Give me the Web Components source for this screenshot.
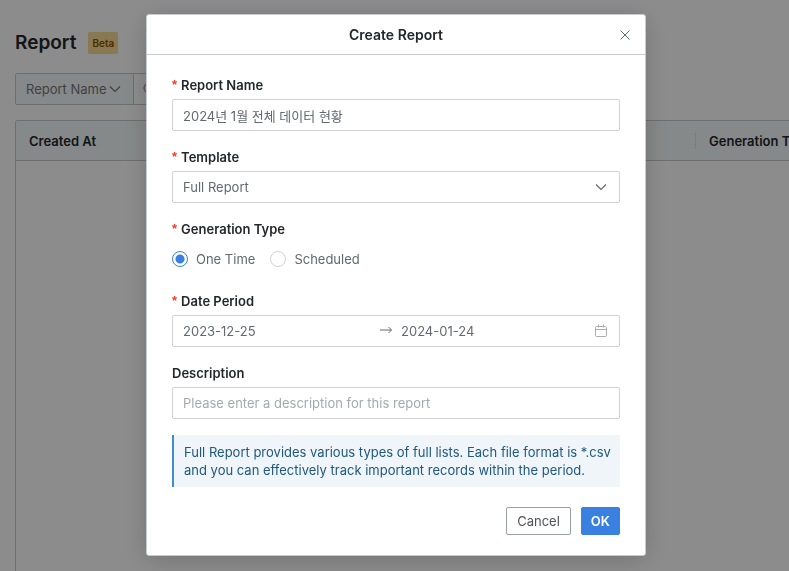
<!DOCTYPE html>
<html lang="en">
<head>
<meta charset="utf-8">
<title>Create Report</title>
<style>
    html, body {
        height: 100%;
        margin: 0;
    }
    body {
        overflow: hidden;
        background: #fff;
        color: #626971;
        font: 13px/18px Inter, "Noto Sans CJK KR", sans-serif;
    }
</style>
</head>
<body>
<report-page></report-page>
<modal-dialog heading="Create Report">
    <form-field label="Report Name" required>
        <text-input name="name" value="2024년 1월 전체 데이터 현황"></text-input>
    </form-field>
    <form-field label="Template" required>
        <select-box name="template" option="Full Report"></select-box>
    </form-field>
    <form-field label="Generation Type" required>
        <radio-group name="type" options="One Time,Scheduled"></radio-group>
    </form-field>
    <form-field label="Date Period" required>
        <date-range from="2023-12-25" to="2024-01-24"></date-range>
    </form-field>
    <form-field label="Description">
        <text-input name="description" placeholder="Please enter a description for this report"></text-input>
    </form-field>
    <info-note>Full Report provides various types of full lists. Each file format is *.csv and you can effectively track important records within the period.</info-note>
    <action-button slot="footer">Cancel</action-button>
    <action-button slot="footer" kind="primary">OK</action-button>
</modal-dialog>

<script>
const base = `
<style>
    * { box-sizing: border-box; }
    :host {
        display: block;
        box-sizing: border-box;
    }
    input, select, button {
        margin: 0;
        font: inherit;
        color: inherit;
    }
    svg {
        display: block;
        fill: none;
        stroke: currentColor;
    }
</style>
`;

const chevron = '<svg width="12" height="12" viewBox="0 0 12 12" stroke-width="1.2"><path d="M1 3.5 6 8.5 11 3.5"/></svg>';

class BaseElement extends HTMLElement {
    constructor() {
        super();
        this._sR = this.attachShadow({ mode: 'open' });
    }

    connectedCallback() {
        this._sR.innerHTML = base + this.render();
    }

    attr(name) {
        return this.getAttribute(name) || '';
    }
}

class ReportPage extends BaseElement {
    render() {
        return `
<style>
    :host {
        display: flex;
        flex-direction: column;
        height: 100%;
        padding: 28px 0 0 15px;
        overflow: hidden;
        color: #72777d;
    }
    .title {
        display: flex;
        align-items: center;
        gap: 12px;
        height: 30px;
    }
    h1 {
        margin: 0;
        font-size: 19px;
        line-height: 30px;
        font-weight: 600;
        color: #24272b;
    }
    .badge {
        padding: 2px 4px;
        border-radius: 2px;
        background: #f8dc96;
        color: #8c5000;
        font-size: 10px;
        font-weight: 600;
    }
    .toolbar {
        display: flex;
        width: 60%;
        height: 32px;
        margin: 15px 0;
        border: 1px solid #c5c8cc;
        border-radius: 2px;
    }
    .filter {
        position: relative;
        display: flex;
        align-items: center;
        border-right: 1px solid #c5c8cc;
        background: #f5f9f9;
    }
    .filter select {
        height: 100%;
        padding: 0 26px 0 10px;
        border: 0;
        appearance: none;
        background: none;
    }
    .filter svg {
        position: absolute;
        right: 12px;
        pointer-events: none;
    }
    .search {
        display: flex;
        align-items: center;
        flex: 1;
        padding-left: 9px;
    }
    .search input {
        flex: 1;
        border: 0;
        background: none;
    }
    .table {
        flex: 1;
        overflow: hidden;
        border: 1px solid #c5c8cc;
        border-width: 1px 0 0 1px;
        border-radius: 3px 0 0 0;
    }
    table {
        width: 900px;
        table-layout: fixed;
        border-collapse: separate;
        border-spacing: 0;
    }
    th {
        height: 40px;
        padding: 0 13px;
        border-bottom: 1px solid #c5c8cc;
        background: #f5f9f9;
        color: #24272b;
        font-weight: 600;
        text-align: left;
        white-space: nowrap;
    }
    th:first-child {
        width: 680px;
        background: linear-gradient(#e0e3e4, #e0e3e4) right center / 1px 16px no-repeat #f5f9f9;
    }
</style>
<div class="title"><h1>Report</h1><span class="badge">Beta</span></div>
<div class="toolbar">
    <div class="filter">
        <select aria-label="Search by"><option>Report Name</option></select>
        ${chevron}
    </div>
    <label class="search">
        <svg width="14" height="14" viewBox="0 0 14 14"><circle cx="6" cy="6" r="5"/><path d="m10 10 3 3"/></svg>
        <input type="text" aria-label="Search">
    </label>
</div>
<div class="table">
    <table><thead><tr><th>Created At</th><th>Generation Type</th></tr></thead></table>
</div>
`;
    }
}

class ModalDialog extends BaseElement {
    render() {
        return `
<style>
    :host {
        position: fixed;
        inset: 0;
        display: flex;
        justify-content: center;
        align-items: flex-start;
        padding: 14px 0 14px 3px;
        background: rgba(0, 0, 0, .45);
    }
    .dialog {
        width: 100%;
        max-width: 500px;
        border: 1px solid #c8cbd0;
        border-radius: 3px;
        background: #fff;
        box-shadow: 0 4px 24px rgba(0, 0, 0, .18);
    }
    header {
        display: grid;
        grid-template-columns: 40px 1fr 40px;
        align-items: center;
        height: 40px;
        border-bottom: 1px solid #c8cbd0;
    }
    h2 {
        grid-column: 2;
        margin: 0;
        font-size: 14px;
        line-height: 20px;
        font-weight: 600;
        text-align: center;
        color: #24272b;
    }
    .close {
        display: flex;
        align-items: center;
        justify-content: center;
        height: 100%;
        padding: 0;
        border: 0;
        background: none;
    }
    .body {
        display: flex;
        flex-direction: column;
        gap: 16px;
        padding: 20px 25px;
    }
    footer {
        display: flex;
        justify-content: flex-end;
        gap: 10px;
        padding: 0 25px 20px;
    }
</style>
<section class="dialog" role="dialog" aria-labelledby="heading">
    <header>
        <h2 id="heading">${this.attr('heading')}</h2>
        <button class="close" type="button" aria-label="Close">
            <svg width="10" height="10" viewBox="0 0 10 10"><path d="m.5.5 9 9m0-9-9 9"/></svg>
        </button>
    </header>
    <div class="body"><slot></slot></div>
    <footer><slot name="footer"></slot></footer>
</section>
`;
    }
}

class FormField extends BaseElement {
    connectedCallback() {
        super.connectedCallback();
        // a label's "for" does not cross shadow roots, so move the focus here
        this._sR.querySelector('label').addEventListener('click', () => {
            this.firstElementChild.shadowRoot.querySelector('input, select').focus();
        });
    }

    render() {
        return `
<style>
    label {
        display: flex;
        gap: 4px;
        margin-bottom: 4px;
        line-height: 20px;
        font-weight: 600;
        color: #24272b;
    }
    .mark {
        color: #ff3522;
        font-family: "Liberation Sans", sans-serif;
    }
</style>
<label>${this.hasAttribute('required') ? '<span class="mark">*</span>' : ''}<span>${this.attr('label')}</span></label>
<slot></slot>
`;
    }
}

class TextInput extends BaseElement {
    render() {
        return `
<style>
    input {
        display: block;
        width: 100%;
        height: 32px;
        padding: 0 10px;
        border: 1px solid #d0d2d6;
        border-radius: 2px;
        background: #fff;
    }
    input::placeholder {
        color: #a5a9ae;
        opacity: 1;
    }
</style>
<input type="text" name="${this.attr('name')}" value="${this.attr('value')}" placeholder="${this.attr('placeholder')}" aria-label="${this.closest('form-field').getAttribute('label')}">
`;
    }
}

class SelectBox extends BaseElement {
    render() {
        return `
<style>
    :host {
        position: relative;
        display: flex;
        align-items: center;
    }
    select {
        width: 100%;
        height: 32px;
        padding: 0 34px 0 10px;
        border: 1px solid #d0d2d6;
        border-radius: 2px;
        appearance: none;
        background: #fff;
    }
    svg {
        position: absolute;
        right: 13px;
        pointer-events: none;
    }
</style>
<select name="${this.attr('name')}" aria-label="${this.closest('form-field').getAttribute('label')}"><option>${this.attr('option')}</option></select>
${chevron}
`;
    }
}

class RadioGroup extends BaseElement {
    render() {
        const items = this.attr('options').split(',').map((text, i) => `
<label><input type="radio" name="${this.attr('name')}"${i === 0 ? ' checked' : ''}>${text}</label>`);
        return `
<style>
    :host {
        display: flex;
        align-items: center;
        gap: 15px;
        height: 32px;
    }
    label {
        display: flex;
        align-items: center;
        gap: 8px;
    }
    input {
        width: 16px;
        height: 16px;
        border: 1px solid #d0d2d6;
        border-radius: 50%;
        appearance: none;
        background: #fff;
    }
    input:checked {
        border-color: #3a80e0;
        background: radial-gradient(circle, #3a80e0 4px, #fff 5px);
    }
</style>
${items.join('')}
`;
    }
}

class DateRange extends BaseElement {
    render() {
        return `
<style>
    :host {
        display: flex;
        align-items: center;
        height: 32px;
        padding: 0 11px 0 10px;
        border: 1px solid #d0d2d6;
        border-radius: 2px;
    }
    input {
        flex: 1;
        min-width: 0;
        padding: 0;
        border: 0;
        background: none;
    }
    .arrow {
        margin: 0 9px 0 8px;
    }
    .calendar {
        margin-left: 4px;
        color: #a9adb2;
    }
</style>
<input type="text" value="${this.attr('from')}" aria-label="Start date">
<svg class="arrow" width="12" height="12" viewBox="0 0 12 12"><path d="M0 5h11.5M8.5 2 11.5 5 8.5 8"/></svg>
<input type="text" value="${this.attr('to')}" aria-label="End date">
<svg class="calendar" width="14" height="14" viewBox="0 0 14 14"><rect x="1.5" y="2.5" width="11" height="10" rx="1"/><path d="M1.5 5.5h11M4.5.5v3M9.5.5v3"/></svg>
`;
    }
}

class InfoNote extends BaseElement {
    render() {
        return `
<style>
    :host {
        padding: 8px 4px 8px 10px;
        border-left: 2px solid #3f8fc8;
        background: #f0f5fa;
        color: #21587f;
    }
</style>
<slot></slot>
`;
    }
}

class ActionButton extends BaseElement {
    render() {
        return `
<style>
    button {
        display: block;
        height: 28px;
        padding: 0 10px;
        border: 1px solid #9a9fa6;
        border-radius: 2px;
        background: #fff;
        color: #4d5359;
    }
    :host([kind="primary"]) button {
        padding: 0 9px;
        border-color: #3a80e0;
        background: #3a80e0;
        color: #fff;
        font-weight: 600;
    }
</style>
<button type="button"><slot></slot></button>
`;
    }
}

window.customElements.define('report-page', ReportPage);
window.customElements.define('modal-dialog', ModalDialog);
window.customElements.define('form-field', FormField);
window.customElements.define('text-input', TextInput);
window.customElements.define('select-box', SelectBox);
window.customElements.define('radio-group', RadioGroup);
window.customElements.define('date-range', DateRange);
window.customElements.define('info-note', InfoNote);
window.customElements.define('action-button', ActionButton);
</script>
</body>
</html>
